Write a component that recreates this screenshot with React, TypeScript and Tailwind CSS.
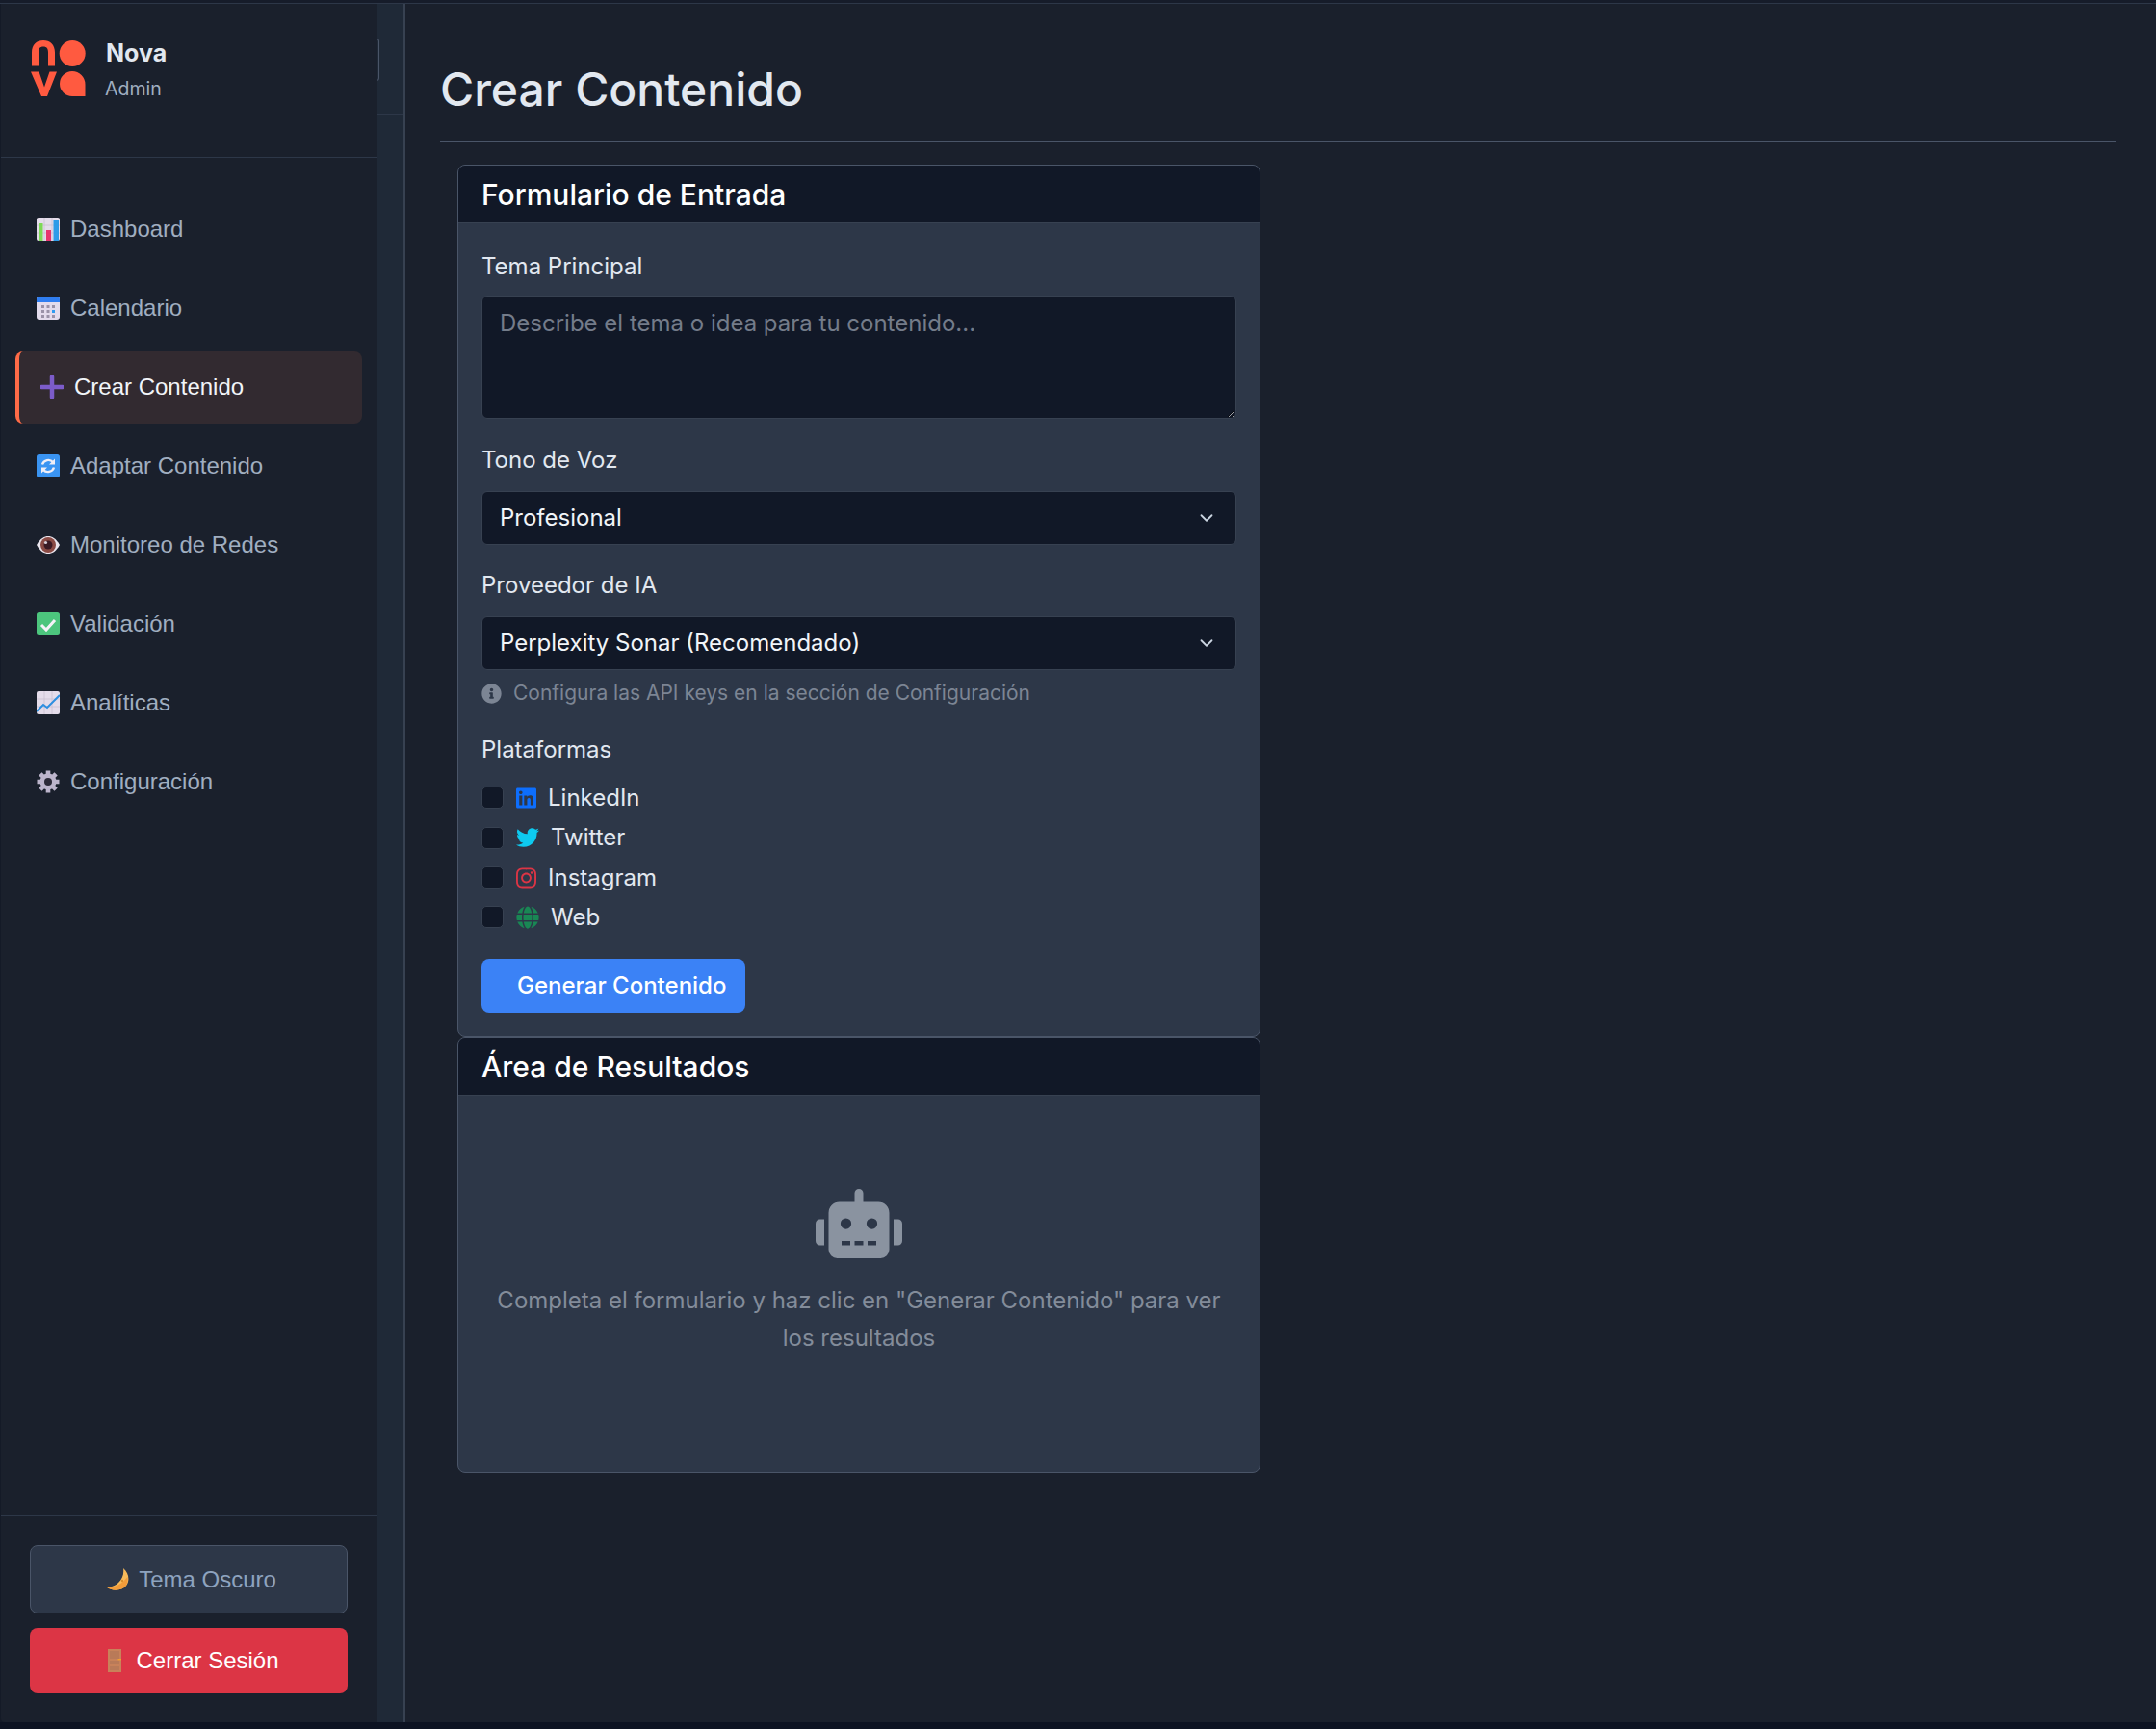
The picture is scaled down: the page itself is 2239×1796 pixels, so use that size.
import React from "react";
import { FaLinkedin, FaTwitter, FaInstagram, FaGlobe, FaRobot, FaInfoCircle } from "react-icons/fa";
import { ChevronDown } from "lucide-react";

const BarEmoji = () => (
  <svg viewBox="0 0 24 24" className="w-6 h-6 shrink-0">
    <rect x="0" y="0" width="24" height="24" rx="2" fill="#e4dcea" />
    <path d="M8 0v24M16 0v24M0 8h24M0 16h24" stroke="#c9c0d2" strokeWidth="0.8" />
    <rect x="2" y="6" width="4.500" height="18" fill="#7ed957" />
    <rect x="10" y="13" width="5" height="11" fill="#e8336d" />
    <rect x="17.500" y="3" width="5.500" height="21" fill="#2d9be8" />
  </svg>
);
const CalEmoji = () => (
  <svg viewBox="0 0 24 24" className="w-6 h-6 shrink-0">
    <rect x="0" y="0" width="24" height="24" rx="3" fill="#e3dbec" />
    <path d="M0 6V3a3 3 0 0 1 3-3h18a3 3 0 0 1 3 3v3z" fill="#2f7df0" />
    <g fill="#9a92a8">
      <rect x="5" y="9" width="3" height="3" /><rect x="10.500" y="9" width="3" height="3" /><rect x="16" y="9" width="3" height="3" />
      <rect x="5" y="14" width="3" height="3" /><rect x="10.500" y="14" width="3" height="3" />
      <rect x="5" y="19" width="3" height="3" /><rect x="10.500" y="19" width="3" height="3" /><rect x="16" y="19" width="3" height="3" />
    </g>
    <rect x="16" y="14" width="3" height="3" fill="#2f9bf0" />
  </svg>
);
const PlusEmoji = () => (
  <svg viewBox="0 0 24 24" className="w-6 h-6 shrink-0">
    <path d="M12 1.500v21M1 12h22" stroke="#7c5cc9" strokeWidth="4.500" strokeLinecap="round" />
  </svg>
);
const SyncEmoji = () => (
  <svg viewBox="0 0 24 24" className="w-6 h-6 shrink-0">
    <rect width="24" height="24" rx="2.500" fill="#3a94f2" />
    <path d="M6 10.500a6.500 6.500 0 0 1 11-2.500M18 13.500a6.500 6.500 0 0 1-11 2.500" stroke="#f0eef6" strokeWidth="2.400" fill="none" />
    <path d="M19 4.500v6h-6zM5 19.500v-6h6z" fill="#f0eef6" />
  </svg>
);
const EyeEmoji = () => (
  <svg viewBox="0 0 24 24" className="w-6 h-6 shrink-0">
    <path d="M0 12C4 5 8 3 12 3s8 2 12 9c-4 7-8 9-12 9S4 19 0 12z" fill="#ebe6ee" />
    <circle cx="12" cy="12" r="8" fill="#8a4a44" />
    <circle cx="12" cy="12" r="4.500" fill="#3a1a24" />
    <circle cx="9.500" cy="9.500" r="1.600" fill="#d8cfd8" />
  </svg>
);
const CheckEmoji = () => (
  <svg viewBox="0 0 24 24" className="w-6 h-6 shrink-0">
    <rect width="24" height="24" rx="2.500" fill="#4cc57d" />
    <path d="M5 13l5 5 9-10" stroke="#f4f2f8" strokeWidth="3" fill="none" />
  </svg>
);
const ChartEmoji = () => (
  <svg viewBox="0 0 24 24" className="w-6 h-6 shrink-0">
    <rect width="24" height="24" rx="2" fill="#e4dcea" />
    <path d="M8 0v24M16 0v24M0 8h24M0 16h24" stroke="#c9c0d2" strokeWidth="0.8" />
    <path d="M0 21l7-7 4 3L24 4" stroke="#2d8fe0" strokeWidth="2" fill="none" />
  </svg>
);
const GearEmoji = () => (
  <svg viewBox="0 0 24 24" className="w-6 h-6 shrink-0">
    <g stroke="#bdb5cc" strokeWidth="4.600">
      <path d="M12 0.500v23M0.500 12h23M3.900 3.900l16.200 16.200M20.100 3.900L3.900 20.100" />
    </g>
    <circle cx="12" cy="12" r="8.500" fill="#bdb5cc" />
    <circle cx="12" cy="12" r="4" fill="#2c2a38" />
  </svg>
);
const MoonEmoji = () => (
  <svg viewBox="0 0 24 24" className="w-6 h-6 shrink-0">
    <path d="M18 0c6 5 7 13 3 18-4 5-14 7-21 1 6 1 10-1 13-4 4-4 6-9 5-15z" fill="#f8bb5a" />
    <path d="M22.500 9c.5 4-.5 7-1.500 9-4 5-14 7-21 1 8 2 16-2 22.500-10z" fill="#f29c3a" />
    <circle cx="17" cy="13" r="1.200" fill="#d98c2c" />
  </svg>
);
const DoorEmoji = () => (
  <svg viewBox="0 0 24 24" className="w-6 h-6 shrink-0">
    <rect x="5" y="0" width="14" height="24" fill="#c8825a" />
    <rect x="7" y="2" width="10" height="8" fill="#b97a58" />
    <rect x="7" y="12" width="10" height="4" fill="#b97a58" />
    <rect x="7" y="18" width="10" height="4" fill="#b97a58" />
    <rect x="15.500" y="10" width="3.500" height="1.400" fill="#f0a030" />
  </svg>
);
const Logo = () => (
  <svg viewBox="0 0 58 60" className="w-[58px] h-[60px] shrink-0">
    <path d="M1 26.500V12.500C1 4.500 6 0 13 0s12 4.500 12 12.500v14h-7V12.500C18 8.500 16.500 6.500 13 6.500S8 8.500 8 12.500v14z" fill="#ff5a40" />
    <circle cx="43.200" cy="13.500" r="13.500" fill="#ff5a40" />
    <path d="M0 32.500h8.500l5.500 16 5.500-16H27L17 58h-6z" fill="#ff5a40" />
    <path d="M43 32a13.500 13.500 0 0 1 13.500 13.500V58H43a13 13 0 0 1 0-26z" fill="#ff5a40" />
  </svg>
);

const items: { label: string; icon: React.ReactNode; active?: boolean }[] = [
  { label: "Dashboard", icon: <BarEmoji /> },
  { label: "Calendario", icon: <CalEmoji /> },
  { label: "Crear Contenido", icon: <PlusEmoji />, active: true },
  { label: "Adaptar Contenido", icon: <SyncEmoji /> },
  { label: "Monitoreo de Redes", icon: <EyeEmoji /> },
  { label: "Validación", icon: <CheckEmoji /> },
  { label: "Analíticas", icon: <ChartEmoji /> },
  { label: "Configuración", icon: <GearEmoji /> },
];

const platforms = [
  { label: "LinkedIn", icon: <FaLinkedin className="text-[#0d6efd] w-[21px] h-6" />, gap: "mr-[12px]", rowH: "h-[41px]" },
  { label: "Twitter", icon: <FaTwitter className="text-[#0dcaf0] w-6 h-6" />, gap: "mr-[12px]", rowH: "h-[42px]" },
  { label: "Instagram", icon: <FaInstagram className="text-[#dc3545] w-[21px] h-6" />, gap: "mr-[12px]", rowH: "h-[41px]" },
  { label: "Web", icon: <FaGlobe className="text-[#198754] w-6 h-6" />, gap: "mr-[12px]", rowH: "h-[41px]" },
];

const selectClass =
  "w-full h-[56px] appearance-none rounded-[6px] border border-[#374151] bg-[#111827] pl-[18px] pr-10 text-[24px] text-[#f1f5f9] outline-none font-['Inter',sans-serif]";

function Select({ value }: { value: string }) {
  return (
    <div className="relative">
      <select className={selectClass} defaultValue={value}>
        <option>{value}</option>
      </select>
      <ChevronDown className="absolute right-[20px] top-[17px] w-[22px] h-[22px] text-[#cbd5e1] pointer-events-none" />
    </div>
  );
}

export default function App() {
  return (
    <div className="h-[1796px] w-[2239px] overflow-hidden bg-[#0d1322] flex flex-col font-['Inter',sans-serif]">
      <div className="h-[3px] shrink-0 bg-[#161c2a]" />
      <div className="h-px shrink-0 bg-[#2d3748]" />
      <div className="h-[1785px] flex shrink-0 pl-px bg-[#141a27]">
        <aside className="w-[390px] shrink-0 bg-[#1a202c] flex flex-col rounded-bl-[4px]">
          <div className="h-[160px] shrink-0 border-b border-[#2d3748] pl-[31px] pt-[38px] flex items-start gap-[20px]">
            <Logo />
            <div>
              <div className="text-[25px] leading-[27px] font-bold text-[#e2e8f0]">Nova</div>
              <div className="text-[19.500px] leading-[27px] mt-[10px] -ml-[1px] text-[#a0aec0]">Admin</div>
            </div>
          </div>
          <nav className="flex-1 pt-[37px] px-[15px] flex flex-col gap-[7px] font-['Liberation_Sans',sans-serif] text-[24px]">
            {items.map((it) => (
              <div
                key={it.label}
                className={
                  it.active
                    ? "h-[75px] pb-[2px] flex items-center gap-[11px] pl-[22px] rounded-[8px] border-l-4 border-[#ff6b47] bg-[#322a30] text-[#f1f5f9]"
                    : "h-[75px] pb-[2px] flex items-center gap-[11px] pl-[22px] rounded-[8px] text-[#a0aec0]"
                }
              >
                {it.icon}
                <span>{it.label}</span>
              </div>
            ))}
          </nav>
          <div className="border-t border-[#2d3748] pt-[30px] pb-[30px] px-[30px] flex flex-col gap-[15px] font-['Liberation_Sans',sans-serif] text-[24px]">
            <div className="h-[71px] pl-[5px] rounded-[8px] border border-[#4a5568] bg-[#2d3748] text-[#8ea3bf] flex items-center justify-center gap-[10px]">
              <MoonEmoji />
              <span>Tema Oscuro</span>
            </div>
            <div className="h-[68px] pl-[5px] rounded-[8px] bg-[#dc3545] text-white flex items-center justify-center gap-[10px]">
              <DoorEmoji />
              <span>Cerrar Sesión</span>
            </div>
          </div>
        </aside>
        <div className="relative w-[27px] shrink-0 bg-[#1f2937]">
          <div className="h-[115px] border-b border-[#2d3748]" />
          <div className="absolute left-0 top-[36px] w-[3px] h-[44px] border border-l-0 border-[#4a5568] rounded-r-[4px] bg-[#1f2937]" />
        </div>
        <div className="w-[3px] shrink-0 bg-[#374151]" />
        <main className="flex-1 bg-[#1a202c] pl-[36px] pr-[42px]">
          <div className="h-[143px] border-b border-[#4a5568] pt-[60px]">
            <h1 className="text-[48px] leading-[58px] font-medium text-[#e2e8f0]">Crear Contenido</h1>
          </div>
          <div className="ml-[18px] mt-[24px] w-[834px]">
            <section className="h-[906px] rounded-[8px] border border-[#4a5568] bg-[#2d3748] overflow-hidden">
              <div className="h-[60px] pt-[2px] bg-[#111827] border-b border-[#374151] pl-[24px] flex items-center">
                <h2 className="text-[30px] font-medium text-white">Formulario de Entrada</h2>
              </div>
              <div className="px-[24px] pt-[27px]">
                <label className="block text-[24px] leading-[36px] text-[#e2e8f0] mb-[12px]">Tema Principal</label>
                <textarea
                  placeholder="Describe el tema o idea para tu contenido..."
                  className="block w-full h-[128px] rounded-[6px] border border-[#374151] bg-[#111827] px-[18px] py-[10px] text-[24px] leading-[36px] text-white placeholder:text-[#747c8a] outline-none"
                />
                <label className="block text-[24px] leading-[36px] text-[#e2e8f0] mt-[25px] mb-[14px]">Tono de Voz</label>
                <Select value="Profesional" />
                <label className="block text-[24px] leading-[36px] text-[#e2e8f0] mt-[24px] mb-[14px]">Proveedor de IA</label>
                <Select value="Perplexity Sonar (Recomendado)" />
                <div className="flex items-center gap-[12px] mt-[6px] h-[36px] text-[21px] text-[#7c8594]">
                  <FaInfoCircle className="w-[21px] h-[21px]" />
                  <span>Configura las API keys en la sección de Configuración</span>
                </div>
                <label className="block text-[24px] leading-[36px] text-[#e2e8f0] mt-[23px] mb-[11px]">Plataformas</label>
                <div>
                  {platforms.map((p) => (
                    <div key={p.label} className={`${p.rowH} flex items-center text-[24px] text-[#e2e8f0]`}>
                      <span className="w-[23px] h-[23px] mr-[13px] rounded-[5px] border border-[#374151] bg-[#111827]" />
                      <span className={p.gap}>{p.icon}</span>
                      <span>{p.label}</span>
                    </div>
                  ))}
                </div>
                <button className="mt-[23px] h-[56px] w-[274px] rounded-[8px] bg-[#3b82f6] text-[24px] font-medium text-white pl-[37px] text-left whitespace-nowrap">
                  Generar Contenido
                </button>
              </div>
            </section>
            <section className="h-[453px] rounded-[8px] border border-[#4a5568] bg-[#2d3748] overflow-hidden">
              <div className="h-[60px] pt-[2px] bg-[#111827] border-b border-[#374151] pl-[24px] flex items-center">
                <h2 className="text-[30px] font-medium text-white">Área de Resultados</h2>
              </div>
              <div className="px-[24px] pt-[97px] flex flex-col items-center text-center">
                <FaRobot className="w-[90px] h-[72px] text-[#8a93a0]" />
                <p className="mt-[24px] text-[24px] leading-[39px] text-[#838c9a]">
                  Completa el formulario y haz clic en "Generar Contenido" para ver los resultados
                </p>
              </div>
            </section>
          </div>
        </main>
      </div>
    </div>
  );
}
